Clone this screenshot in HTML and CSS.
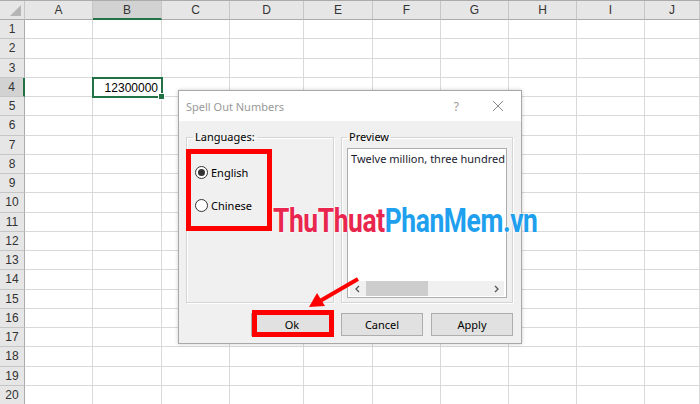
FILE: index.html
```html
<!DOCTYPE html>
<html lang="en">
<head>
  <meta charset="UTF-8">
  <title>Spell Out Numbers</title>
  <link rel="stylesheet" href="styles.css">
</head>
<body>
  <div class="sheet">
    <div class="hd corner"></div><div class="hd">A</div><div class="hd hd-sel">B</div><div class="hd">C</div><div class="hd">D</div><div class="hd">E</div><div class="hd">F</div><div class="hd">G</div><div class="hd">H</div><div class="hd">I</div><div class="hd">J</div>
    <div class="rh">1</div><div class="c"></div><div class="c"></div><div class="c"></div><div class="c"></div><div class="c"></div><div class="c"></div><div class="c"></div><div class="c"></div><div class="c"></div><div class="c"></div>
    <div class="rh">2</div><div class="c"></div><div class="c"></div><div class="c"></div><div class="c"></div><div class="c"></div><div class="c"></div><div class="c"></div><div class="c"></div><div class="c"></div><div class="c"></div>
    <div class="rh">3</div><div class="c"></div><div class="c"></div><div class="c"></div><div class="c"></div><div class="c"></div><div class="c"></div><div class="c"></div><div class="c"></div><div class="c"></div><div class="c"></div>
    <div class="rh rh-sel">4</div><div class="c"></div><div class="c c-sel">12300000</div><div class="c"></div><div class="c"></div><div class="c"></div><div class="c"></div><div class="c"></div><div class="c"></div><div class="c"></div><div class="c"></div>
    <div class="rh">5</div><div class="c"></div><div class="c"></div><div class="c"></div><div class="c"></div><div class="c"></div><div class="c"></div><div class="c"></div><div class="c"></div><div class="c"></div><div class="c"></div>
    <div class="rh">6</div><div class="c"></div><div class="c"></div><div class="c"></div><div class="c"></div><div class="c"></div><div class="c"></div><div class="c"></div><div class="c"></div><div class="c"></div><div class="c"></div>
    <div class="rh">7</div><div class="c"></div><div class="c"></div><div class="c"></div><div class="c"></div><div class="c"></div><div class="c"></div><div class="c"></div><div class="c"></div><div class="c"></div><div class="c"></div>
    <div class="rh">8</div><div class="c"></div><div class="c"></div><div class="c"></div><div class="c"></div><div class="c"></div><div class="c"></div><div class="c"></div><div class="c"></div><div class="c"></div><div class="c"></div>
    <div class="rh">9</div><div class="c"></div><div class="c"></div><div class="c"></div><div class="c"></div><div class="c"></div><div class="c"></div><div class="c"></div><div class="c"></div><div class="c"></div><div class="c"></div>
    <div class="rh">10</div><div class="c"></div><div class="c"></div><div class="c"></div><div class="c"></div><div class="c"></div><div class="c"></div><div class="c"></div><div class="c"></div><div class="c"></div><div class="c"></div>
    <div class="rh">11</div><div class="c"></div><div class="c"></div><div class="c"></div><div class="c"></div><div class="c"></div><div class="c"></div><div class="c"></div><div class="c"></div><div class="c"></div><div class="c"></div>
    <div class="rh">12</div><div class="c"></div><div class="c"></div><div class="c"></div><div class="c"></div><div class="c"></div><div class="c"></div><div class="c"></div><div class="c"></div><div class="c"></div><div class="c"></div>
    <div class="rh">13</div><div class="c"></div><div class="c"></div><div class="c"></div><div class="c"></div><div class="c"></div><div class="c"></div><div class="c"></div><div class="c"></div><div class="c"></div><div class="c"></div>
    <div class="rh">14</div><div class="c"></div><div class="c"></div><div class="c"></div><div class="c"></div><div class="c"></div><div class="c"></div><div class="c"></div><div class="c"></div><div class="c"></div><div class="c"></div>
    <div class="rh">15</div><div class="c"></div><div class="c"></div><div class="c"></div><div class="c"></div><div class="c"></div><div class="c"></div><div class="c"></div><div class="c"></div><div class="c"></div><div class="c"></div>
    <div class="rh">16</div><div class="c"></div><div class="c"></div><div class="c"></div><div class="c"></div><div class="c"></div><div class="c"></div><div class="c"></div><div class="c"></div><div class="c"></div><div class="c"></div>
    <div class="rh">17</div><div class="c"></div><div class="c"></div><div class="c"></div><div class="c"></div><div class="c"></div><div class="c"></div><div class="c"></div><div class="c"></div><div class="c"></div><div class="c"></div>
    <div class="rh">18</div><div class="c"></div><div class="c"></div><div class="c"></div><div class="c"></div><div class="c"></div><div class="c"></div><div class="c"></div><div class="c"></div><div class="c"></div><div class="c"></div>
    <div class="rh">19</div><div class="c"></div><div class="c"></div><div class="c"></div><div class="c"></div><div class="c"></div><div class="c"></div><div class="c"></div><div class="c"></div><div class="c"></div><div class="c"></div>
    <div class="rh">20</div><div class="c"></div><div class="c"></div><div class="c"></div><div class="c"></div><div class="c"></div><div class="c"></div><div class="c"></div><div class="c"></div><div class="c"></div><div class="c"></div>
  </div>

  <!-- dialog floats over the sheet -->
  <div class="dialog">
    <div class="dlg-title">
      <span class="dlg-name">Spell Out Numbers</span>
      <span class="dlg-help">?</span>
      <svg class="dlg-close" width="12" height="12" viewBox="0 0 12 12"><path d="M1 1L11 11M11 1L1 11" stroke="#888" stroke-width="1" fill="none"/></svg>
    </div>
    <div class="dlg-body">
      <div class="groups">
        <fieldset class="group group-lang">
          <legend>Languages:</legend>
          <label class="radio"><span class="dot checked"></span>English</label>
          <label class="radio"><span class="dot"></span>Chinese</label>
        </fieldset>
        <fieldset class="group group-prev">
          <legend>Preview</legend>
          <div class="preview">
            <div class="preview-text">Twelve million, three hundred</div>
            <div class="hscroll">
              <svg width="8" height="8" viewBox="0 0 8 8"><path d="M5 1L2 4L5 7" stroke="#555" stroke-width="1.3" fill="none"/></svg>
              <div class="track"><div class="thumb"></div></div>
              <svg width="8" height="8" viewBox="0 0 8 8"><path d="M3 1L6 4L3 7" stroke="#555" stroke-width="1.3" fill="none"/></svg>
            </div>
          </div>
        </fieldset>
      </div>
      <div class="buttons">
        <button class="btn">Ok</button>
        <button class="btn">Cancel</button>
        <button class="btn">Apply</button>
      </div>
    </div>
  </div>

  <!-- annotations -->
  <div class="mark mark-radio"></div>
  <div class="mark mark-ok"></div>
  <svg class="arrow" width="700" height="404" viewBox="0 0 700 404">
    <line x1="358" y1="279" x2="320" y2="301" stroke="#ff0000" stroke-width="4"/>
    <polygon points="309,307 325,306 317,293" fill="#ff0000"/>
  </svg>
  <div class="watermark"><span class="wm-red">ThuThuat</span><span class="wm-blue">PhanMem.vn</span></div>
</body>
</html>
```

FILE: styles.css
```css
body {
  margin: 0;
  width: 700px;
  height: 404px;
  overflow: hidden;
  background: #fff;
  font-family: "Liberation Sans", Arial, sans-serif;
  position: relative;
}

.sheet {
  display: grid;
  grid-template-columns: 25px 68px 69px 68px 74px 69px 68px 68px 68px 68px 1fr;
  grid-template-rows: 19px repeat(20, 19.25px);
  height: 404px;
  border-top: 1px solid #ababab;
  box-sizing: border-box;
}
.hd {
  background: #e6e6e6;
  border-right: 1px solid #c6c6c6;
  border-bottom: 1px solid #ababab;
  font-size: 12px;
  color: #333;
  display: flex;
  align-items: center;
  justify-content: center;
  box-sizing: border-box;
}
.hd-sel {
  background: #d2d2d2;
  border-bottom: 2px solid #217346;
}
.corner {
  position: relative;
}
.corner::after {
  content: "";
  position: absolute;
  right: 3px;
  bottom: 3px;
  border-left: 11px solid transparent;
  border-bottom: 11px solid #b5b5b5;
}
.rh {
  background: #e6e6e6;
  border-right: 1px solid #ababab;
  border-bottom: 1px solid #c6c6c6;
  font-size: 12px;
  color: #333;
  display: flex;
  align-items: center;
  justify-content: center;
  box-sizing: border-box;
}
.rh-sel {
  background: #d2d2d2;
  border-right: 2px solid #217346;
}
.c {
  border-right: 1px solid #d9d9d9;
  border-bottom: 1px solid #d9d9d9;
  box-sizing: border-box;
  font-size: 12px;
  color: #000;
}
.c-sel {
  position: relative;
  outline: 2px solid #217346;
  outline-offset: -1px;
  text-align: right;
  padding: 3px 3px 0 0;
}
.c-sel::after {
  content: "";
  position: absolute;
  right: -4px;
  bottom: -4px;
  width: 5px;
  height: 5px;
  background: #217346;
  border: 1px solid #fff;
}

/* dialog */
.dialog {
  position: absolute;
  left: 178px;
  top: 90px;
  width: 344px;
  height: 254px;
  box-sizing: border-box;
  border: 1px solid #a8a8a8;
  background: #f0f0f0;
  box-shadow: 0 0 4px rgba(0, 0, 0, 0.2);
  display: flex;
  flex-direction: column;
  font-family: "Noto Sans", "Open Sans", sans-serif;
  font-size: 11px;
  color: #000;
}
.dlg-title {
  height: 30px;
  background: #fff;
  display: flex;
  align-items: center;
  padding: 0 8px 0 7px;
}
.dlg-name {
  color: #999;
  flex: 1;
}
.dlg-help {
  color: #999;
  font-size: 12px;
  margin-right: 33px;
}
.dlg-close {
  margin-right: 9px;
}
.dlg-body {
  flex: 1;
  display: flex;
  flex-direction: column;
  padding: 8px 8px 0 7px;
}
.groups {
  display: flex;
  gap: 7px;
  height: 174px;
}
.group {
  margin: 0;
  padding: 0 6px;
  border: 1px solid #d5d5d5;
  box-shadow: inset 1px 1px 0 #fff, 1px 1px 0 #fff;
  min-width: 0;
}
.group legend {
  padding: 0 2px;
  line-height: 16px;
}
.group-lang {
  width: 148px;
  box-sizing: border-box;
  padding-top: 19px;
}
.group-prev {
  flex: 1;
  padding: 3px 5px 3px 5px;
}
.radio {
  display: flex;
  align-items: center;
  gap: 3px;
  height: 17px;
  margin: 0 0 16px 2px;
}
.dot {
  width: 11px;
  height: 11px;
  border: 1px solid #333;
  border-radius: 50%;
  background: #fff;
  position: relative;
}
.dot.checked::after {
  content: "";
  position: absolute;
  left: 2px;
  top: 2px;
  width: 7px;
  height: 7px;
  border-radius: 50%;
  background: #333;
}
.preview {
  height: 150px;
  box-sizing: border-box;
  background: #fff;
  border: 1px solid #adadad;
  display: flex;
  flex-direction: column;
}
.preview-text {
  flex: 1;
  padding: 2px 0 0 3px;
  white-space: nowrap;
  overflow: hidden;
  color: #1a1a2e;
}
.hscroll {
  height: 15px;
  margin: 0 2px 1px 2px;
  background: #f0f0f0;
  display: flex;
  align-items: center;
  gap: 4px;
  padding: 0 4px;
}
.track {
  flex: 1;
  height: 15px;
}
.thumb {
  width: 62px;
  height: 15px;
  background: #cdcdcd;
}
.buttons {
  display: flex;
  justify-content: flex-end;
  gap: 8px;
  margin-top: 10px;
}
.btn {
  width: 82px;
  height: 23px;
  background: #e1e1e1;
  border: 1px solid #adadad;
  font-family: "Noto Sans", "Open Sans", sans-serif;
  font-size: 11px;
  color: #000;
  padding: 0;
  cursor: pointer;
}

/* red annotations */
.mark {
  position: absolute;
  border: 5px solid #ff0000;
  box-sizing: border-box;
}
.mark-radio {
  left: 186px;
  top: 149px;
  width: 86px;
  height: 82px;
}
.mark-ok {
  left: 252px;
  top: 310px;
  width: 82px;
  height: 27px;
}
.arrow {
  position: absolute;
  left: 0;
  top: 0;
}
.watermark {
  position: absolute;
  left: 273px;
  top: 201px;
  font-family: Roboto, "Liberation Sans", sans-serif;
  font-weight: 700;
  font-size: 33px;
  letter-spacing: -0.5px;
  transform: scaleX(0.8);
  transform-origin: left top;
  white-space: nowrap;
  text-shadow: 0 0 2px #fff, 0 0 2px #fff;
}
.wm-red {
  color: #e8264e;
}
.wm-blue {
  color: #1ea0ef;
}
```
